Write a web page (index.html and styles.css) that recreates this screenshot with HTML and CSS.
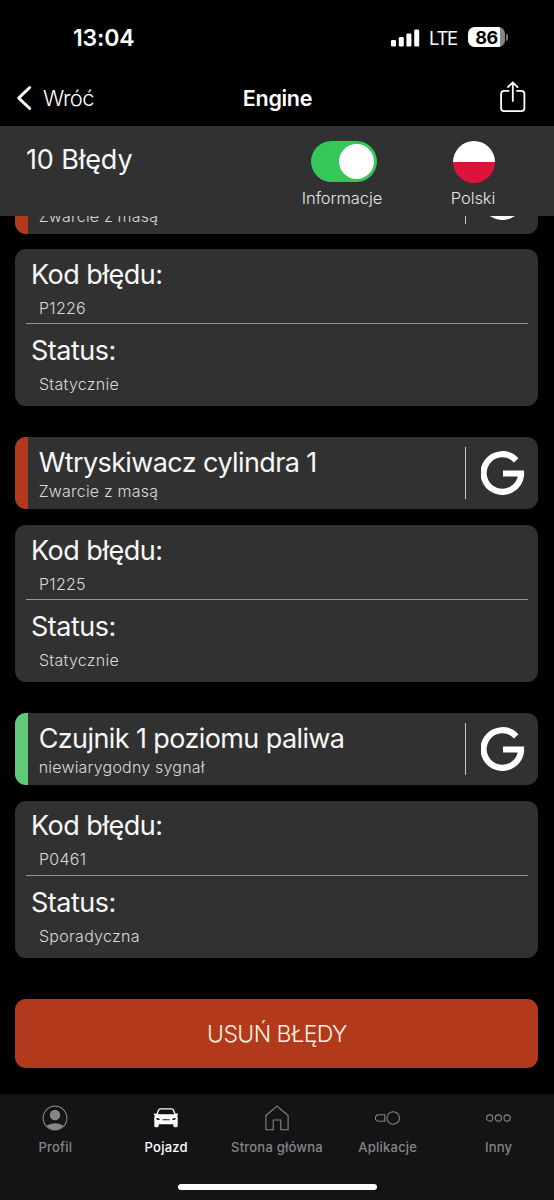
FILE: index.html
```html
<!DOCTYPE html>
<html lang="pl">
<head>
<meta charset="utf-8">
<meta name="viewport" content="width=device-width">
<title>Engine</title>
<link rel="stylesheet" href="styles.css">
</head>
<body>
<svg width="0" height="0" class="defs"><defs>
  <symbol id="g-logo" viewBox="0 0 44 44"><path d="M35.2 9.3A18.8 18.8 0 1 0 40 24.4V22.5H22" fill="none" stroke="#fff" stroke-width="6.2"/></symbol>
</defs></svg>
<div class="screen">
  <div class="status">
    <span class="time">13:04</span>
    <div class="indicators">
      <svg class="signal" width="29" height="18" viewBox="0 0 29 18" fill="#fff"><rect x="0" y="11" width="5" height="6.5" rx="1.3"/><rect x="7.8" y="8" width="5" height="9.5" rx="1.3"/><rect x="15.4" y="4.4" width="5" height="13.1" rx="1.3"/><rect x="23.2" y="0.4" width="5" height="17.1" rx="1.3"/></svg>
      <span class="lte">LTE</span>
      <div class="battery"><span class="level">86</span></div><i class="nub"></i>
    </div>
  </div>
  <nav class="nav">
    <a class="back"><svg width="16" height="26" viewBox="0 0 16 26"><path d="M13.7 2.5 2.7 13l11 10.5" fill="none" stroke="#fff" stroke-width="3" stroke-linecap="round" stroke-linejoin="round"/></svg><span>Wróć</span></a>
    <h1>Engine</h1>
    <svg class="share" width="26" height="32" viewBox="0 0 26 32" fill="none" stroke="#fff" stroke-width="1.8" stroke-linecap="round" stroke-linejoin="round"><path d="M8.6 9.8H4.2A3.1 3.1 0 0 0 1.1 12.9V27A3.1 3.1 0 0 0 4.2 30.1H21.3A3.1 3.1 0 0 0 24.4 27V12.9A3.1 3.1 0 0 0 21.3 9.8H17M12.8 20V1.6M8 6.1 12.8 1.3l4.8 4.8"/></svg>
  </nav>
  <header class="summary">
    <h2>10 Błędy</h2>
    <div class="control info"><span class="toggle"><i></i></span><span class="caption">Informacje</span></div>
    <div class="control lang"><span class="flag"></span><span class="caption">Polski</span></div>
  </header>
  <main class="list">
    <section class="fault">
      <article class="title-card red"><div class="text"><h3></h3><p>Zwarcie z masą</p></div><i class="divider"></i><svg class="g"><use href="#g-logo"/></svg></article>
      <article class="details"><h4>Kod błędu:</h4><p>P1226</p><hr><h4>Status:</h4><p>Statycznie</p></article>
    </section>
    <section class="fault">
      <article class="title-card red"><div class="text"><h3>Wtryskiwacz cylindra 1</h3><p>Zwarcie z masą</p></div><i class="divider"></i><svg class="g"><use href="#g-logo"/></svg></article>
      <article class="details"><h4>Kod błędu:</h4><p>P1225</p><hr><h4>Status:</h4><p>Statycznie</p></article>
    </section>
    <section class="fault">
      <article class="title-card green"><div class="text"><h3>Czujnik 1 poziomu paliwa</h3><p>niewiarygodny sygnał</p></div><i class="divider"></i><svg class="g"><use href="#g-logo"/></svg></article>
      <article class="details"><h4>Kod błędu:</h4><p>P0461</p><hr><h4>Status:</h4><p>Sporadyczna</p></article>
    </section>
    <button class="clear">USUŃ BŁĘDY</button>
  </main>
  <footer class="tabs">
    <div class="tab"><svg width="26" height="26" viewBox="0 0 26 26"><defs><clipPath id="c"><circle cx="13" cy="13" r="11.8"/></clipPath></defs><circle cx="13" cy="13" r="11.9" fill="none" stroke="#858587" stroke-width="1.1"/><circle cx="13" cy="10" r="5.2" fill="#858587"/><ellipse cx="13" cy="24" rx="10" ry="5.7" fill="#858587" clip-path="url(#c)"/></svg><span>Profil</span></div>
    <div class="tab active"><svg width="26" height="26" viewBox="0 0 26 26"><path fill="#fff" fill-rule="evenodd" d="M7.3 3.2H18.7Q20.4 3.2 21 4.8L22.7 9Q23.6 8.2 25 8.6Q25.6 9.4 24.6 10.3L24 10.6Q24.7 11.6 24.7 13V20.8Q24.7 22.2 23.4 22.2H21.7Q20.3 22.2 20.3 20.8V19.2H5.7V20.8Q5.7 22.2 4.3 22.2H2.6Q1.3 22.2 1.3 20.8V13Q1.3 11.6 2 10.6L1.4 10.3Q.4 9.4 1 8.6Q2.4 8.2 3.3 9L5 4.8Q5.6 3.2 7.3 3.2ZM7.2 4.6Q6.4 4.6 6.1 5.4L4.7 9.2H21.3L19.9 5.4Q19.6 4.6 18.8 4.6ZM3.3 12.9Q3 15.3 6.7 15Q7 12.7 3.3 12.9ZM22.7 12.9Q23 15.3 19.3 15Q19 12.7 22.7 12.9ZM9.4 14.3V15.3H16.6V14.3Z"/></svg><span>Pojazd</span></div>
    <div class="tab"><svg width="26" height="26" viewBox="0 0 26 26"><path d="M9.2 24.8H1.9V10.5L13 1.1 24.1 10.5V24.8H16.8V15H9.2Z" fill="none" stroke="#858587" stroke-width="1.1" stroke-linejoin="round"/></svg><span>Strona główna</span></div>
    <div class="tab"><svg width="26" height="26" viewBox="0 0 26 26" fill="none" stroke="#858587" stroke-width="1.1"><circle cx="18.2" cy="13" r="6.3"/><path d="M9.8 9.8H3.6A3.2 3.2 0 0 0 3.6 16.2H9.8Z"/></svg><span>Aplikacje</span></div>
    <div class="tab"><svg width="26" height="26" viewBox="0 0 26 26" fill="none" stroke="#858587" stroke-width="1.1"><circle cx="3.7" cy="13" r="3.1"/><circle cx="12.4" cy="13" r="3.1"/><circle cx="21.1" cy="13" r="3.1"/></svg><span>Inny</span></div>
    <i class="home-bar"></i>
  </footer>
</div>
</body>
</html>
```
FILE: styles.css
```css
* { box-sizing: border-box; }
body { margin: 0; background: #000; color: #fff; font-family: Inter, "Noto Sans", sans-serif; }
h1, h2, h3, h4, p { margin: 0; font-weight: 300; white-space: nowrap; }
h2, h3, h4 { font-weight: 400; color: #f7f7f7; }
i { display: block; }
svg { display: block; flex: none; }
.defs { position: absolute; }
.screen { width: 554px; height: 1200px; display: flex; flex-direction: column; overflow: hidden; }
.status { height: 70px; flex: none; display: flex; justify-content: space-between; padding: 24px 46px 0 73px; }
.time { font-size: 23px; line-height: 28px; font-weight: 600; letter-spacing: -0.15px; }
.indicators { display: flex; align-items: center; height: 28px; }
.signal { margin-top: -1px; }
.lte { font-size: 18.5px; font-weight: 400; margin-left: 9px; width: 39px; letter-spacing: -1.3px; }
.battery { width: 37px; height: 20px; border-radius: 6.5px; margin-top: -2px; background: linear-gradient(90deg, #fff 32px, #858585 32px); }
.level { display: block; width: 37px; text-align: center; color: #000; font-size: 18px; line-height: 21px; font-weight: 700; letter-spacing: -0.5px; }
.nub { width: 2px; height: 7px; margin: -2px 0 0 1px; background: #777; border-radius: 0 2px 2px 0; }
.nav { height: 56px; flex: none; display: grid; grid-template-columns: 1fr auto 1fr; align-items: center; padding: 0 28px 0 16px; }
.back { display: flex; align-items: center; gap: 11px; font-size: 22px; font-weight: 300; letter-spacing: -0.6px; }
h1 { font-size: 21.5px; font-weight: 600; line-height: 28px; letter-spacing: -0.3px; padding-left: 13px; }
.share { justify-self: end; margin-top: -2px; }
.summary { height: 90px; flex: none; background: #313131; display: grid; grid-template-columns: 276px 132px 130px 16px; }
h2 { font-size: 27px; line-height: 34px; margin: 17px 0 0 26px; letter-spacing: -0.12px; }
.control { display: flex; flex-direction: column; align-items: center; padding-top: 15px; }
.toggle { width: 66px; height: 41px; border-radius: 21px; background: #35c759; padding: 3px; margin-left: 3px; }
.toggle i { width: 35px; height: 35px; margin-left: 25.5px; border-radius: 50%; background: #fff; }
.flag { width: 42px; height: 42px; margin-left: 1px; border-radius: 50%; background: linear-gradient(#fff 50%, #dc143c 50%); }
.caption { font-size: 16.5px; line-height: 20px; color: #e6e6e6; font-weight: 300; letter-spacing: -0.1px; margin-top: 6px; }
.flag + .caption { margin-top: 5px; }
.list { flex: 1; min-height: 0; overflow: hidden; display: flex; flex-direction: column; justify-content: flex-end; padding: 0 15.6px 26px 15.4px; }
.fault { flex: none; display: flex; flex-direction: column; gap: 15.6px; margin-bottom: 30.8px; }
.title-card { height: 72.2px; border-radius: 11px; background: #313131; overflow: hidden; display: flex; align-items: center; border-left: 13px solid; padding: 0 13px 0 10.3px; }
.red { border-color: #b3391d; }
.green { border-color: #62c97a; }
.text { flex: 1; height: 100%; }
h3 { font-size: 27px; line-height: 34px; height: 34px; margin-top: 9px; letter-spacing: -0.6px; }
.text p { font-size: 16px; line-height: 20px; margin-top: 1px; color: #dadada; letter-spacing: 0.2px; }
.divider { width: 1.4px; height: 52px; background: #c8c8c8; margin-right: 15.3px; }
.g { width: 44px; height: 44px; }
.details { height: 157px; border-radius: 11px; background: #313131; padding: 8.6px 10.6px 0; }
h4 { font-size: 27px; line-height: 34px; padding-left: 5px; letter-spacing: -0.5px; }
.details p { font-size: 16px; line-height: 20px; margin-top: 6px; padding-left: 13px; color: #dadada; letter-spacing: 0.28px; }
hr { border: 0; height: 1px; background: #959595; margin: 5.4px 0 10px; }
.clear { flex: none; height: 69.5px; margin-top: 10.2px; border: 0; border-radius: 11px; background: #b3391d; color: #fff3df; font: 300 23px/70px Inter, sans-serif; padding: 0; letter-spacing: -0.6px; }
.tabs { height: 106px; flex: none; background: #141416; display: grid; grid-template-columns: repeat(5, 1fr); grid-template-rows: 84px 6px; padding-top: 11px; }
.tab { display: flex; flex-direction: column; align-items: center; color: #858587; font-size: 13px; line-height: 18px; font-weight: 450; gap: 7px; white-space: nowrap; letter-spacing: 0.22px; }
.active { color: #fff; font-weight: 550; }
.home-bar { grid-column: 1 / -1; justify-self: center; width: 199px; height: 6px; border-radius: 3px; background: #fff; margin-top: -5px; }
```
